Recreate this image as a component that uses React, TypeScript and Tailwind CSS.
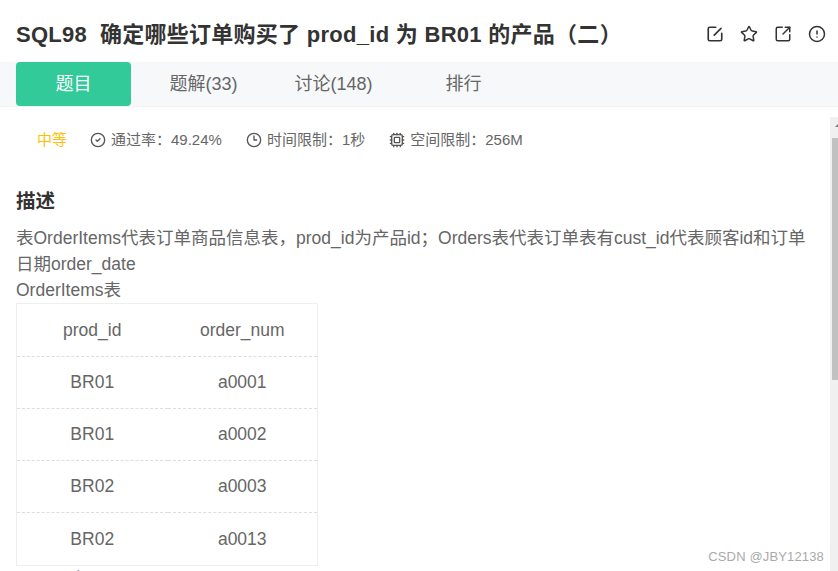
import React from 'react';
import { CircleCheck, Clock3, Cpu, Star, SquareArrowOutUpRight, CircleAlert } from 'lucide-react';

const tabs = ['题目', '题解(33)', '讨论(148)', '排行'];

const rows = [
  ['BR01', 'a0001'],
  ['BR01', 'a0002'],
  ['BR02', 'a0003'],
  ['BR02', 'a0013'],
];

const EditIcon: React.FC = () => (
  <svg width={18} height={18} viewBox="0 0 24 24" fill="none" stroke="currentColor" strokeWidth={2.2} strokeLinecap="round" strokeLinejoin="round">
    <path d="M13 3H5a2 2 0 0 0-2 2v14a2 2 0 0 0 2 2h14a2 2 0 0 0 2-2v-8" />
    <path d="M20 4.5 11 13.5" />
  </svg>
);

const App: React.FC = () => {
  return (
    <div className="relative h-[571px] w-[838px] overflow-hidden bg-white font-['Liberation_Sans','Noto_Sans_CJK_SC',sans-serif] text-[#555]">
      {/* Title bar */}
      <header className="flex h-[62px] items-center justify-between pl-4 pr-[12px] pt-[6px]">
        <h1 className="whitespace-pre text-[22px] tracking-[0.28px] font-bold text-[#333]">SQL98  确定哪些订单购买了 prod_id 为 BR01 的产品（二）</h1>
        <div className="flex items-center gap-[16px] text-[#333]">
          <EditIcon />
          <Star size={18} strokeWidth={2} />
          <SquareArrowOutUpRight size={18} strokeWidth={2} />
          <CircleAlert size={18} strokeWidth={2} />
        </div>
      </header>

      {/* Tabs */}
      <nav className="flex h-[45px] gap-[15px] border-b border-[#f2f3f5] bg-[#f7f8fa] px-4">
        {tabs.map((tab, i) => (
          <div
            key={tab}
            className={`flex h-[44px] w-[115px] items-center justify-center rounded-[4px] text-[18px] ${
              i === 0 ? 'bg-[#32ca99] text-white' : 'text-[#666]'
            }`}
          >
            {tab}
          </div>
        ))}
      </nav>

      <div className="flex">
        <main className="w-[830px] pl-4">
          {/* Meta */}
          <div className="mt-[23px] flex h-[20px] items-center pl-[21px] text-[15px] text-[#666]">
            <span className="text-[#ffc107]">中等</span>
            <CircleCheck size={16} className="ml-[23px] text-[#555]" />
            <span className="ml-[5px]">通过率：49.24%</span>
            <Clock3 size={16} className="ml-[24px] text-[#555]" />
            <span className="ml-[5px]">时间限制：1秒</span>
            <Cpu size={16} className="ml-[24px] text-[#555]" />
            <span className="ml-[5px]">空间限制：256M</span>
          </div>

          {/* Description */}
          <h2 className="mt-[38px] text-[19.5px] leading-[26px] font-bold text-[#333]">描述</h2>
          <div className="mt-[11px] w-[800px] text-[17.5px] leading-[26px] text-[#666]">
            <p>表OrderItems代表订单商品信息表，prod_id为产品id；Orders表代表订单表有cust_id代表顾客id和订单日期order_date</p>
            <p>OrderItems表</p>
          </div>

          <table className="w-[302px] border-collapse border border-[#eeeeee] text-center text-[17.5px] text-[#666]">
            <thead>
              <tr className="h-[53px] border-b border-dashed border-[#dddddd]">
                <th className="w-[151px] font-normal">prod_id</th>
                <th className="font-normal">order_num</th>
              </tr>
            </thead>
            <tbody>
              {rows.map(([id, num], i) => (
                <tr key={num} className={`${i === rows.length - 1 ? 'h-[53px]' : 'h-[52px] border-b border-dashed border-[#dddddd]'}`}>
                  <td>{id}</td>
                  <td>{num}</td>
                </tr>
              ))}
            </tbody>
          </table>
          <p className="mt-[3px] text-[17.5px] leading-[20px] text-[#666]">Orders表</p>
        </main>

        {/* Scrollbar */}
        <div className="mt-[10px] flex h-[454px] w-2 flex-col bg-[#f0f0f0]">
          <div className="h-[21px] pl-[5px] pt-[7px]">
            <div className="h-0 w-0 border-x-[3px] border-b-[3px] border-x-transparent border-b-[#777]" />
          </div>
          <div className="ml-[2px] h-[242px] w-[6px] bg-[#c1c1c1]" />
        </div>
      </div>

      {/* Watermark */}
      <span className="absolute bottom-[5px] right-[14px] text-[13px] tracking-[0.15px] text-[#aaa]">CSDN @JBY12138</span>
    </div>
  );
};

export default App;
